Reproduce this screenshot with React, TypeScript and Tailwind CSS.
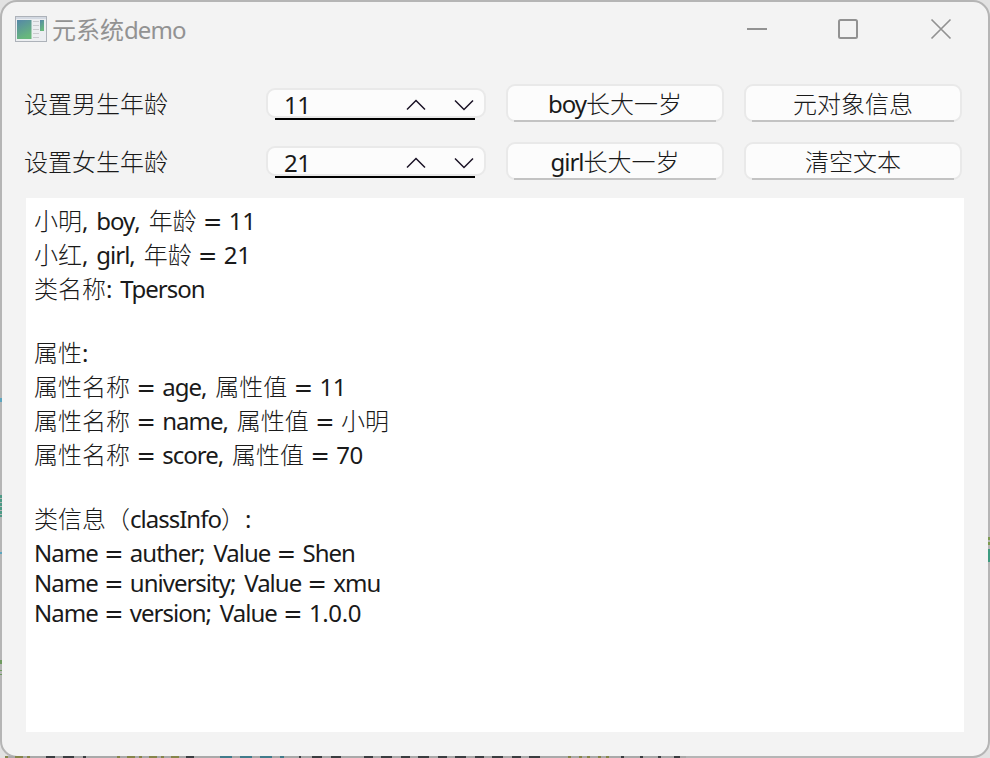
import React from "react";

const CJK = /[\u3000-\u303f\u4e00-\u9fff\uff00-\uffef]/;
const RUNS = /[\u3000-\u303f\u4e00-\u9fff\uff00-\uffef]+|=|[,:;]|\d[\d.]*|[^\u3000-\u303f\u4e00-\u9fff\uff00-\uffef=,:;\d]+/g;

function runClass(run: string) {
  if (CJK.test(run)) return "font-['Noto_Sans_CJK_SC',sans-serif] font-light tracking-normal";
  if (run === "=") return "-mx-px font-['DejaVu_Sans',sans-serif] text-[23px] leading-none tracking-normal";
  if (/[,:;]/.test(run)) return "tracking-[0.4px]";
  if (/\d/.test(run)) return "tracking-[-0.4px]";
  return "";
}

/** Splits mixed text into Chinese, numeric, sign and Latin runs. */
function Mixed({ text }: { text: string }) {
  return (
    <>
      {(text.match(RUNS) ?? []).map((run, i) => (
        <span key={i} className={runClass(run)}>
          {run}
        </span>
      ))}
    </>
  );
}

function Chevron({ up }: { up?: boolean }) {
  return (
    <svg className="mt-[3px]" width="20" height="12" viewBox="0 0 20 12" fill="none" stroke="#1a1226" strokeWidth="1.5">
      <path d={up ? "M1 10.5 10 1.5 19 10.5" : "M1 1.5 10 10.5 19 1.5"} />
    </svg>
  );
}

function Spin({ value }: { value: string }) {
  return (
    <div className="relative mt-1 flex h-[30px] w-[220px] items-center rounded-[9px] border-2 border-[#e9e9e9] bg-[#fcfcfc] pl-4">
      <span className="mt-[3px] w-[122px] leading-[30px]">
        <Mixed text={value} />
      </span>
      <Chevron up />
      <span className="w-7" />
      <Chevron />
      <span className="absolute -bottom-1 left-[7px] h-0.5 w-[200px] bg-black" />
    </div>
  );
}

function Button({ label }: { label: string }) {
  return (
    <button className="relative flex h-[38px] w-[218px] items-center justify-center rounded-[9px] border-2 border-[#e9e9e9] bg-[#fcfcfc]">
      <span className="leading-[34px]">
        <Mixed text={label} />
      </span>
      <span className="absolute -bottom-0.5 left-1.5 h-0.5 w-[202px] bg-[#c3c3c3]" />
    </button>
  );
}

function Row({ label, value, a, b }: { label: string; value: string; a: string; b: string }) {
  return (
    <div className="flex h-[38px]">
      <div className="w-[242px] leading-[38px]">
        <Mixed text={label} />
      </div>
      <Spin value={value} />
      <div className="ml-5 flex gap-5">
        <Button label={a} />
        <Button label={b} />
      </div>
    </div>
  );
}

const LINES = [
  "小明, boy, 年龄 = 11",
  "小红, girl, 年龄 = 21",
  "类名称: Tperson",
  "",
  "属性:",
  "属性名称 = age, 属性值 = 11",
  "属性名称 = name, 属性值 = 小明",
  "属性名称 = score, 属性值 = 70",
  "",
  "类信息（classInfo）:",
  "Name = auther; Value = Shen",
  "Name = university; Value = xmu",
  "Name = version; Value = 1.0.0",
];

function AppIcon() {
  return (
    <svg className="mt-px" width="32" height="26" viewBox="0 0 32 26">
      <defs>
        <linearGradient id="pane" x1="0" y1="0" x2="0.4" y2="1">
          <stop offset="0" stopColor="#5587a8" />
          <stop offset="1" stopColor="#68b87c" />
        </linearGradient>
      </defs>
      <rect x="0.5" y="0.5" width="31" height="25" fill="#eceef1" stroke="#adb2b9" />
      <rect x="1" y="1" width="30" height="2" fill="#d3d9e2" />
      <rect x="2" y="4" width="14.500" height="19" fill="url(#pane)" />
      <rect x="25" y="4" width="4" height="11" fill="url(#pane)" />
      <path d="M18 5.5h6M18 9.5h6M18 13.5h6M18 17.5h6M18 21.5h6" stroke="#c9cbce" />
    </svg>
  );
}

export default function App() {
  return (
    <div className="relative h-[758px] w-[990px] overflow-hidden bg-[#e2e2e2] font-['Noto_Sans','Noto_Sans_CJK_SC',sans-serif] text-[24px] tracking-[-1px] text-[#1a1a1a] [word-spacing:2.2px]">
      <div className="h-[758px] w-[990px] rounded-[17px] border-2 border-[#b5b5b5] bg-[#f3f3f3]">
        <div className="flex h-[82px] items-start pl-[13px] pt-[13px] text-[#929292]">
          <AppIcon />
          <span className="ml-[5px] mt-[-1px] w-[695px] leading-[32px] tracking-normal">
            元系统<span className="tracking-[-0.9px]">demo</span>
          </span>
          <svg className="mt-px" width="206" height="24" viewBox="0 0 206 24" fill="none" stroke="#929292" strokeWidth="2">
            <path d="M0 13H20" />
            <rect x="92" y="4" width="18" height="18" rx="1.5" />
            <path d="M184.500 3.500 203.500 22.500M203.500 3.500 184.500 22.500" strokeWidth="1.700" />
          </svg>
        </div>
        <div className="flex flex-col gap-5 pl-[22px]">
          <Row label="设置男生年龄" value="11" a="boy长大一岁" b="元对象信息" />
          <Row label="设置女生年龄" value="21" a="girl长大一岁" b="清空文本" />
        </div>
        <div className="ml-6 mt-[18px] h-[534px] w-[938px] whitespace-pre bg-white pl-2 pt-1.5">
          {LINES.map((line, i) => (
            <div key={i} className={CJK.test(line) ? "h-[34px] leading-[32px]" : "h-[30px] leading-[34px]"}>
              <Mixed text={line} />
            </div>
          ))}
        </div>
      </div>
      <svg className="absolute left-0 top-0" width="990" height="758" fill="none" strokeWidth="2">
        <path d="M1 495V517" stroke="#4d9a86" strokeDasharray="3 1" />
        <path d="M1 660V664M1 670V671M1 674V675" stroke="#6f9a60" />
        <path d="M1 398V402M1 552V554" stroke="#5ba5bf" />
        <path d="M989 537V547" stroke="#7d9b50" strokeDasharray="3 2" />
        <path d="M989 549V562" stroke="#3d9b80" />
        <path d="M8 757H686" stroke="#a9a9a9" />
        <path d="M5 757H30M117 757H180" stroke="#85854a" strokeDasharray="3 7 8 4" />
        <path d="M46 757H86M186 757H194M364 757H540" stroke="#3a3d40" strokeDasharray="9 8 11 9" />
        <path d="M220 757H284" stroke="#417b8a" strokeDasharray="12 8" />
        <path d="M299 757H301M312 757H322M331 757H341" stroke="#3a3d40" />
        <path d="M568 757H612" stroke="#85854a" strokeDasharray="3 8 3 5" />
        <path d="M621 757H624M640 757H643M658 757H661M674 757H680" stroke="#3a3d40" />
      </svg>
    </div>
  );
}
